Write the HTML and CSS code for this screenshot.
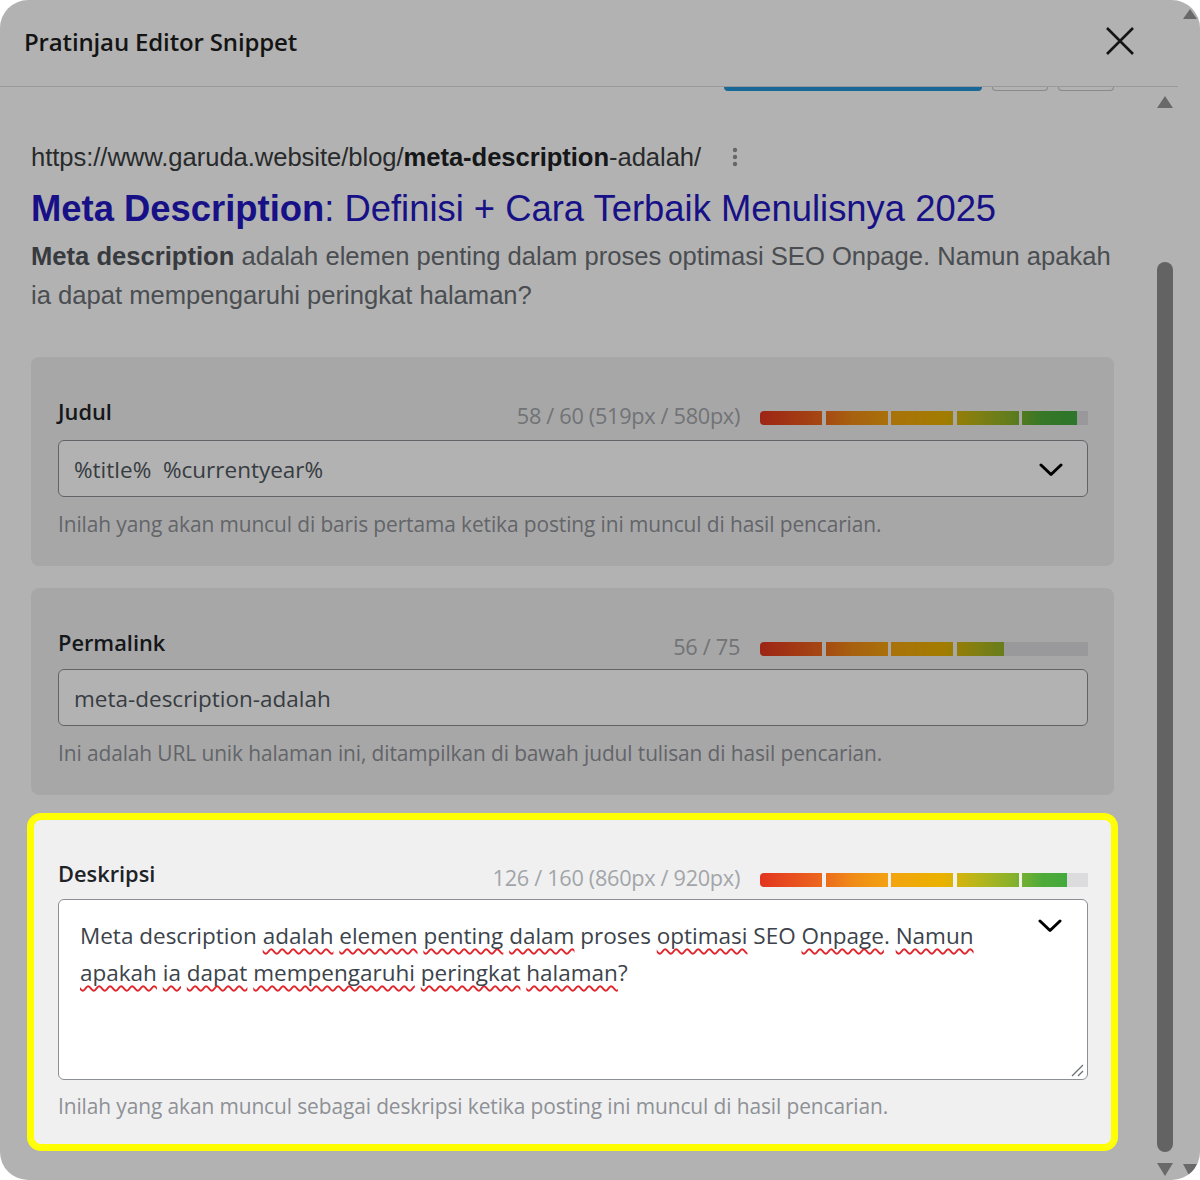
FILE: index.html
```html
<!DOCTYPE html>
<html lang="id">
<head>
<meta charset="utf-8">
<title>Pratinjau Editor Snippet</title>
<link rel="stylesheet" href="styles.css">
</head>
<body>
<div class="modal">
  <header class="modal-head">
    <h1 class="modal-title">Pratinjau Editor Snippet</h1>
    <button class="close" aria-label="Tutup">
      <svg width="30" height="30" viewBox="0 0 30 30"><path d="M2 2 L28 28 M28 2 L2 28" stroke="#1e1e1e" stroke-width="2.6" fill="none"/></svg>
    </button>
  </header>
  <div class="modal-body">
    <div class="content">
      <div class="tabs">
        <span class="tab active"></span>
        <span class="tab"></span>
        <span class="tab"></span>
      </div>

      <div class="serp">
        <div class="serp-url">
          <span>https://www.garuda.website/blog/<b>meta-description</b>-adalah/</span>
          <svg class="kebab" width="6" height="20" viewBox="0 0 6 20"><circle cx="3" cy="3" r="2.2"/><circle cx="3" cy="10" r="2.2"/><circle cx="3" cy="17" r="2.2"/></svg>
        </div>
        <div class="serp-title"><b>Meta Description</b>: Definisi + Cara Terbaik Menulisnya 2025</div>
        <p class="serp-desc"><b>Meta description</b> adalah elemen penting dalam proses optimasi SEO Onpage. Namun apakah ia dapat mempengaruhi peringkat halaman?</p>
      </div>

      <section class="field">
        <div class="field-head">
          <span class="field-label">Judul</span>
          <span class="count">58 / 60 (519px / 580px)</span>
          <div class="meter"><div class="meter-fill" style="width:96.5%"></div></div>
        </div>
        <div class="input">
          <span>%title%&nbsp; %currentyear%</span>
          <svg class="chev" width="24" height="14" viewBox="0 0 24 14"><path d="M2 2 L12 11.5 L22 2"/></svg>
        </div>
        <p class="help">Inilah yang akan muncul di baris pertama ketika posting ini muncul di hasil pencarian.</p>
      </section>

      <section class="field field-tight">
        <div class="field-head">
          <span class="field-label">Permalink</span>
          <span class="count">56 / 75</span>
          <div class="meter"><div class="meter-fill" style="width:74.5%"></div></div>
        </div>
        <div class="input">
          <span>meta-description-adalah</span>
        </div>
        <p class="help">Ini adalah URL unik halaman ini, ditampilkan di bawah judul tulisan di hasil pencarian.</p>
      </section>

      <section class="field focus">
        <div class="field-head">
          <span class="field-label">Deskripsi</span>
          <span class="count">126 / 160 (860px / 920px)</span>
          <div class="meter"><div class="meter-fill" style="width:93.5%"></div></div>
        </div>
        <div class="textarea">
          <p class="ta-text">Meta description <u>adalah</u> <u>elemen</u> <u>penting</u> <u>dalam</u> proses <u>optimasi</u> SEO <u>Onpage</u>. <u>Namun</u> <u>apakah</u> <u>ia</u> <u>dapat</u> <u>mempengaruhi</u> <u>peringkat</u> <u>halaman</u>?</p>
          <svg class="chev ta-chev" width="24" height="14" viewBox="0 0 24 14"><path d="M2 2 L12 11.5 L22 2"/></svg>
          <svg class="grip" width="14" height="14" viewBox="0 0 14 14"><path d="M13 2 L2 13 M13 8 L8 13"/></svg>
        </div>
        <p class="help">Inilah yang akan muncul sebagai deskripsi ketika posting ini muncul di hasil pencarian.</p>
      </section>
    </div>
    <div class="scrollbar">
      <span class="arrow up"></span>
      <span class="thumb"></span>
      <span class="arrow down"></span>
    </div>
    <div class="outer-bar">
      <span class="arrow up small"></span>
      <span class="arrow down small"></span>
    </div>
  </div>
  <div class="overlay"></div>
</div>
</body>
</html>
```

FILE: styles.css
```css
* { box-sizing: border-box; }
html, body { margin: 0; padding: 0; background: #ffffff; }
body { width: 1200px; height: 1180px; overflow: hidden; }

.modal {
  position: relative;
  z-index: 0;
  width: 1200px;
  height: 1180px;
  border-radius: 28px;
  overflow: hidden;
  background: #ffffff;
  display: flex;
  flex-direction: column;
  font-family: "Open Sans", "Noto Sans", sans-serif;
}

.overlay {
  position: absolute;
  inset: 0;
  z-index: 1;
  background: rgba(0, 0, 0, 0.3);
  pointer-events: none;
}

.modal-head {
  height: 87px;
  flex: none;
  margin-right: 22px;
  border-bottom: 1px solid #dcdcde;
  display: flex;
  align-items: center;
  justify-content: space-between;
  padding: 0 43px 4px 24px;
}
.modal-title {
  margin: 0;
  font-size: 24px;
  font-weight: 600;
  color: #1e1e1e;
  letter-spacing: -0.15px;
}
.close {
  border: 0;
  background: none;
  padding: 0;
  width: 30px;
  height: 30px;
  display: flex;
}

.modal-body {
  flex: 1;
  min-height: 0;
  display: flex;
}
.content {
  width: 1150px;
  flex: none;
  padding: 0 36px 0 31px;
}

.tabs {
  display: flex;
  justify-content: flex-end;
  gap: 10px;
  height: 4px;
}
.tab {
  width: 56px;
  height: 4px;
  border: 1px solid #c3c4c7;
  border-top: 0;
  border-radius: 0 0 4px 4px;
}
.tab.active {
  width: 258px;
  background: #2196d8;
  border-color: #2196d8;
}

.serp {
  padding-top: 50px;
  font-family: "Liberation Sans", Arial, sans-serif;
}
.serp-url {
  display: flex;
  align-items: center;
  gap: 31px;
  height: 32px;
  font-size: 25.6px;
  color: #3a3d40;
  letter-spacing: -0.05px;
}
.serp-url b { color: #202124; }
.kebab { fill: #909398; }
.serp-title {
  margin-top: 14px;
  line-height: 44px;
  font-size: 36.4px;
  color: #2318c2;
  white-space: nowrap;
}
.serp-desc {
  margin: 6px 0 0;
  font-size: 25.6px;
  line-height: 39px;
  color: #6a6f74;
}
.serp-desc b { color: #50545a; }

.field {
  margin-top: 42px;
  background: #f0f0f1;
  border-radius: 8px;
  padding: 39px 26px 27px 27px;
}
.field + .field { margin-top: 22px; }
.field-tight .input { margin-top: 12px; }
.field.focus {
  position: relative;
  z-index: 2;
  margin-top: 22px;
  padding-top: 41px;
  padding-bottom: 26px;
  box-shadow: 0 0 0 4px #ffff00, inset 0 0 0 3px #ffff00;
  border-radius: 10px;
}

.field-head {
  display: flex;
  align-items: center;
  height: 30px;
}
.field-label {
  flex: 1;
  font-size: 21.8px;
  font-weight: 600;
  color: #1d2327;
}
.count {
  font-size: 21.7px;
  color: #a2a5a8;
  margin: 8px 20px 0 0;
  letter-spacing: -0.3px;
}
.meter {
  width: 328px;
  height: 14px;
  background: #dcdcde;
  border-radius: 3px 0 0 3px;
  overflow: hidden;
  margin-top: 14px;
}
.meter-fill {
  height: 100%;
  border-radius: 4px 0 0 4px;
  background-image:
    repeating-linear-gradient(90deg, transparent 0 62px, #f0f0f1 62px 65.6px),
    linear-gradient(90deg, #e2351f 0%, #ec641d 18%, #f08a17 28%, #f3a410 40%, #e9b200 56%, #b9b61a 66%, #8db22a 76%, #4fab38 86%, #3ba840 100%);
  background-size: 328px 100%;
  background-repeat: no-repeat;
}

.input {
  margin-top: 14px;
  height: 57px;
  border: 1px solid #8c8f94;
  border-radius: 6px;
  background: #ffffff;
  display: flex;
  align-items: center;
  justify-content: space-between;
  padding: 2px 24px 0 15px;
  font-size: 22.5px;
  color: #50575e;
}
.chev {
  fill: none;
  stroke: #000000;
  stroke-width: 3;
  stroke-linecap: round;
  stroke-linejoin: round;
}

.help {
  margin: 12px 0 0;
  line-height: 30px;
  font-size: 20.9px;
  color: #8e9196;
  letter-spacing: -0.1px;
}

.textarea {
  position: relative;
  margin-top: 11px;
  height: 181px;
  border: 1px solid #8c8f94;
  border-radius: 6px;
  background: #ffffff;
  padding: 17px 90px 0 21px;
}
.field.focus .help { margin-top: 11px; }
.ta-text {
  margin: 0;
  font-size: 22.5px;
  line-height: 37px;
  color: #3c434a;
}
.ta-text u {
  text-decoration: underline wavy #e0252b;
  text-decoration-thickness: 1.6px;
  text-decoration-skip-ink: none;
  text-underline-offset: 4px;
}
.ta-chev {
  position: absolute;
  top: 19px;
  right: 25px;
}
.grip {
  position: absolute;
  right: 3px;
  bottom: 2px;
  fill: none;
  stroke: #6b6e72;
  stroke-width: 1.3;
}

.scrollbar {
  width: 30px;
  flex: none;
  display: flex;
  flex-direction: column;
  align-items: center;
  padding: 9px 0 3px;
}
.thumb {
  width: 16px;
  flex: none;
  height: 890px;
  margin: 154px 0 11px;
  border-radius: 8px;
  background: #8e8e8e;
}
.arrow {
  width: 0;
  height: 0;
  border-left: 8px solid transparent;
  border-right: 8px solid transparent;
}
.arrow.up { border-bottom: 12px solid #979797; }
.arrow.down { border-top: 13px solid #979797; }

.outer-bar {
  width: 20px;
  flex: none;
  display: flex;
  flex-direction: column;
  justify-content: space-between;
  align-items: center;
  margin-top: -80px;
  padding: 2px 0 3px;
}
.arrow.small { border-left-width: 7px; border-right-width: 7px; }
.arrow.up.small { border-bottom-width: 10px; }
```
